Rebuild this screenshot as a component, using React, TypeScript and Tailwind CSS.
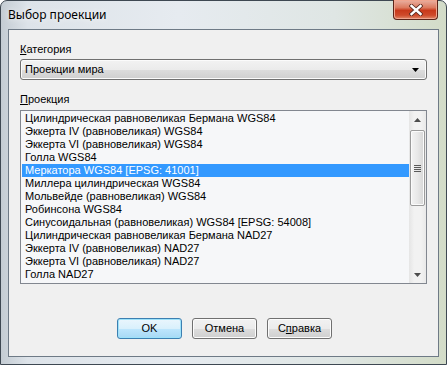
import React from "react";

const rows = [
  "Цилиндрическая равновеликая Бермана WGS84",
  "Эккерта IV (равновеликая) WGS84",
  "Эккерта VI (равновеликая) WGS84",
  "Голла WGS84",
  "Меркатора WGS84 [EPSG: 41001]",
  "Миллера цилиндрическая WGS84",
  "Мольвейде (равновеликая) WGS84",
  "Робинсона WGS84",
  "Синусоидальная (равновеликая) WGS84 [EPSG: 54008]",
  "Цилиндрическая равновеликая Бермана NAD27",
  "Эккерта IV (равновеликая) NAD27",
  "Эккерта VI (равновеликая) NAD27",
  "Голла NAD27",
];

const selected = 4;

function CloseGlyph() {
  return (
    <svg width="14" height="12" viewBox="0 0 14 12">
      <path d="M2.5 2 L11.5 10 M11.5 2 L2.5 10" stroke="#5a2a20" strokeWidth="4.2" strokeLinecap="square" />
      <path d="M2.5 2 L11.5 10 M11.5 2 L2.5 10" stroke="#ffffff" strokeWidth="2.4" strokeLinecap="square" />
    </svg>
  );
}

function Btn({ children, primary }: { children: React.ReactNode; primary?: boolean }) {
  return (
    <div
      className={
        primary
          ? "w-[65px] h-[21px] rounded-[3px] border border-[#3c7fb1] bg-[linear-gradient(#eaf6fd_0%,#d9f0fc_50%,#bee6fd_51%,#a7d9f5_100%)] shadow-[inset_0_0_0_1px_#9de2fa] flex items-center justify-center"
          : "w-[65px] h-[21px] rounded-[3px] border border-[#707070] bg-[linear-gradient(#f2f2f2_0%,#ebebeb_50%,#dddddd_51%,#cfcfcf_100%)] shadow-[inset_0_0_0_1px_#fcfcfc] flex items-center justify-center"
      }
    >
      {children}
    </div>
  );
}

export default function App() {
  return (
    <div className="w-[447px] h-[365px] rounded-t-[7px] border border-[#3e4852] bg-[linear-gradient(90deg,#c4ccd3_0%,#dde3e9_6%,#e6ebf0_40%,#dfe6e4_75%,#d3dcc8_100%)] flex flex-col font-['Liberation_Sans',sans-serif] text-[11px] text-black">
      {/* title bar */}
      <div className="h-[28px] flex items-start shrink-0">
        <div className="pl-[7px] pt-[6px] font-['Noto_Sans',sans-serif] text-[12px] leading-[16px] text-black [text-shadow:0_0_6px_#ffffff]">
          Выбор проекции
        </div>
        <div className="ml-auto mr-[8px] -mt-[1px] w-[45px] h-[20px] rounded-b-[4px] border border-[#5b2419] border-t-0 bg-[linear-gradient(#eab2a3_0%,#dc7a5f_40%,#c8391b_55%,#cf4a2b_80%,#e08a6a_100%)] shadow-[inset_0_0_0_1px_#f0a58f] flex items-center justify-center">
          <CloseGlyph />
        </div>
      </div>

      {/* client area */}
      <div className="mx-[7px] mb-[7px] flex-1 border border-[#6e7a86] bg-[#f0f0f0] px-[11px] pt-[13px] flex flex-col">
        <div className="leading-[13px] h-[13px]">
          <span className="underline underline-offset-1">К</span>атегория
        </div>
        <div className="mt-[3px] h-[21px] rounded-[3px] border border-[#707070] bg-[linear-gradient(#f2f2f2_0%,#ebebeb_50%,#dddddd_51%,#cfcfcf_100%)] shadow-[inset_0_0_0_1px_#fbfbfb] flex items-center pl-[4px] pr-[7px]">
          <span className="flex-1">Проекции мира</span>
          <svg width="7" height="4" viewBox="0 0 7 4">
            <path d="M0 0 H7 L3.5 4 Z" fill="#000" />
          </svg>
        </div>

        <div className="mt-[13px] leading-[13px] h-[13px]">
          <span className="underline underline-offset-1">П</span>роекция
        </div>
        <div className="mt-[4px] h-[174px] border border-[#828790] bg-[#f6f7f9] flex">
          <div className="flex-1 pt-[1px] pl-[1px] overflow-hidden">
            {rows.map((r, i) => (
              <div
                key={i}
                className={
                  i === selected
                    ? "h-[13px] leading-[13px] pl-[3px] bg-[#3399ff] text-white whitespace-nowrap"
                    : "h-[13px] leading-[13px] pl-[3px] whitespace-nowrap"
                }
              >
                {r}
              </div>
            ))}
          </div>
          {/* scrollbar */}
          <div className="w-[17px] bg-[linear-gradient(90deg,#e5e5e5,#f2f2f2_30%,#f2f2f2_70%,#e9e9e9)] flex flex-col items-center">
            <div className="h-[17px] flex items-center justify-center">
              <svg width="7" height="4" viewBox="0 0 7 4">
                <path d="M0 4 H7 L3.5 0 Z" fill="#4d4d4d" />
              </svg>
            </div>
            <div className="mt-[2px] w-[15px] h-[76px] rounded-[2px] border border-[#9b9b9b] bg-[linear-gradient(90deg,#f3f3f3,#e8e8e8_50%,#d6d6d6)] shadow-[inset_0_0_0_1px_#fbfbfb] flex items-center justify-center">
              <div className="flex flex-col gap-[1px]">
                <div className="w-[7px] h-[1px] bg-[#5a5a5a]" />
                <div className="w-[7px] h-[1px] bg-[#5a5a5a]" />
                <div className="w-[7px] h-[1px] bg-[#5a5a5a]" />
                <div className="w-[7px] h-[1px] bg-[#5a5a5a]" />
              </div>
            </div>
            <div className="mt-auto h-[17px] flex items-center justify-center">
              <svg width="7" height="4" viewBox="0 0 7 4">
                <path d="M0 0 H7 L3.5 4 Z" fill="#4d4d4d" />
              </svg>
            </div>
          </div>
        </div>

        <div className="mt-[34px] flex justify-center gap-[10px] pl-[2px]">
          <Btn primary>OK</Btn>
          <Btn>Отмена</Btn>
          <Btn>
            <span>
              С<span className="underline underline-offset-1">п</span>равка
            </span>
          </Btn>
        </div>
      </div>
    </div>
  );
}
